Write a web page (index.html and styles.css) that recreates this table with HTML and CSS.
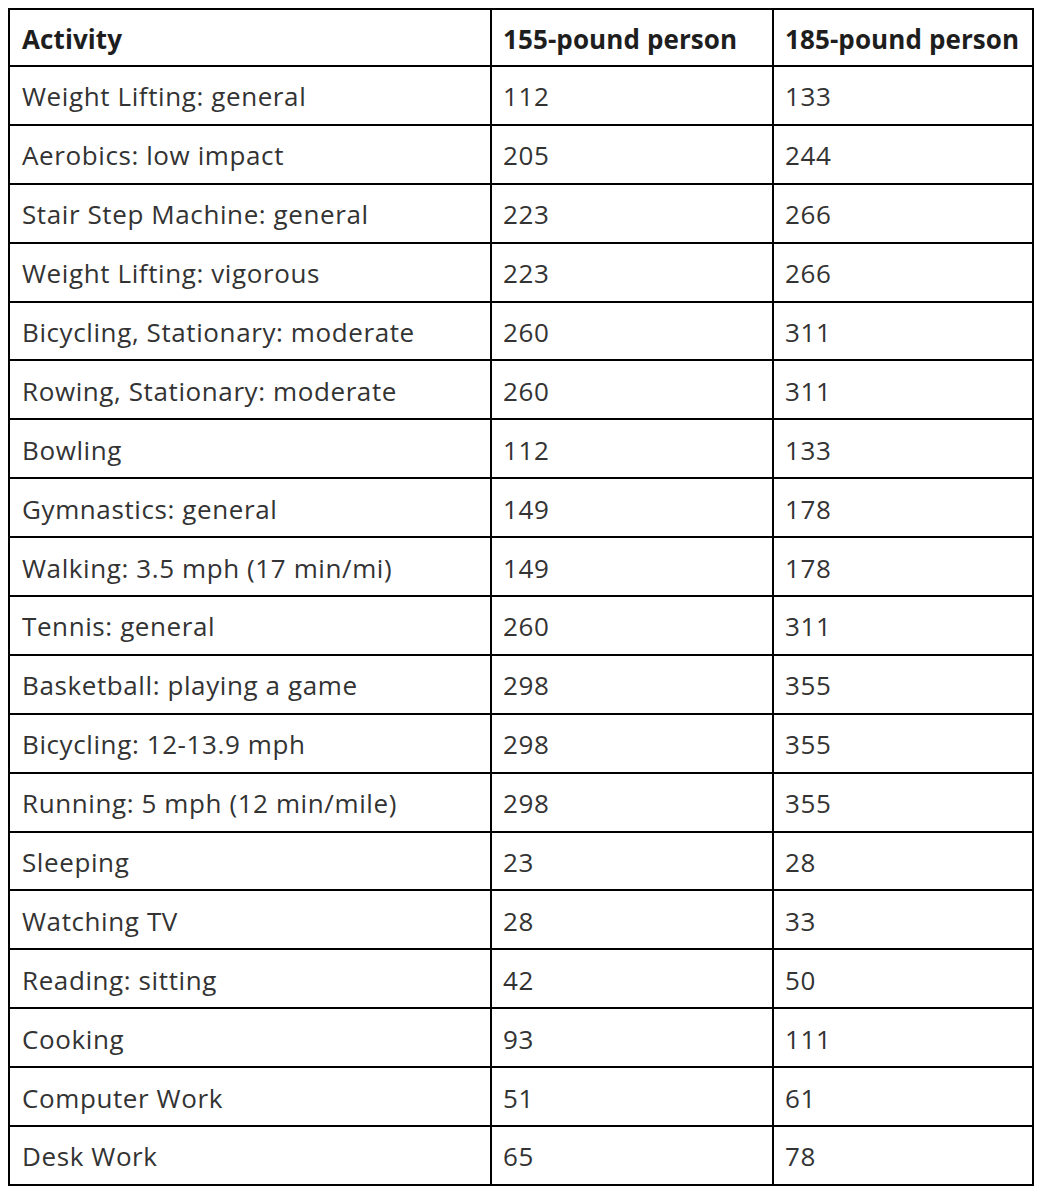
FILE: index.html
```html
<!DOCTYPE html>
<html>
<head>
<meta charset="utf-8">
<link rel="stylesheet" href="styles.css">
</head>
<body>
<table class="cal-table">
  <colgroup>
    <col class="col-activity">
    <col class="col-155">
    <col class="col-185">
  </colgroup>
  <thead>
    <tr class="head-row"><th>Activity</th><th>155-pound person</th><th>185-pound person</th></tr>
  </thead>
  <tbody>
    <tr><td>Weight Lifting: general</td><td>112</td><td>133</td></tr>
    <tr><td>Aerobics: low impact</td><td>205</td><td>244</td></tr>
    <tr><td>Stair Step Machine: general</td><td>223</td><td>266</td></tr>
    <tr><td>Weight Lifting: vigorous</td><td>223</td><td>266</td></tr>
    <tr><td>Bicycling, Stationary: moderate</td><td>260</td><td>311</td></tr>
    <tr><td>Rowing, Stationary: moderate</td><td>260</td><td>311</td></tr>
    <tr><td>Bowling</td><td>112</td><td>133</td></tr>
    <tr><td>Gymnastics: general</td><td>149</td><td>178</td></tr>
    <tr><td>Walking: 3.5 mph (17 min/mi)</td><td>149</td><td>178</td></tr>
    <tr><td>Tennis: general</td><td>260</td><td>311</td></tr>
    <tr><td>Basketball: playing a game</td><td>298</td><td>355</td></tr>
    <tr><td>Bicycling: 12-13.9 mph</td><td>298</td><td>355</td></tr>
    <tr><td>Running: 5 mph (12 min/mile)</td><td>298</td><td>355</td></tr>
    <tr><td>Sleeping</td><td>23</td><td>28</td></tr>
    <tr><td>Watching TV</td><td>28</td><td>33</td></tr>
    <tr><td>Reading: sitting</td><td>42</td><td>50</td></tr>
    <tr><td>Cooking</td><td>93</td><td>111</td></tr>
    <tr><td>Computer Work</td><td>51</td><td>61</td></tr>
    <tr><td>Desk Work</td><td>65</td><td>78</td></tr>
  </tbody>
</table>
</body>
</html>
```

FILE: styles.css
```css
html, body {
  background: #ffffff;
}
body {
  margin: 8px;
  font-family: "Open Sans", Lato, "Liberation Sans", sans-serif;
  color: #333333;
}
.cal-table {
  border-collapse: separate;
  border-spacing: 0;
  table-layout: fixed;
  width: 1026px;
  border-top: 2px solid #000000;
  border-left: 2px solid #000000;
  font-size: 26px;
  letter-spacing: 0.6px;
}
.col-activity { width: 482px; }
.col-155 { width: 282px; }
.col-185 { width: 260px; }
.cal-table tr {
  height: 58.9px;
}
.cal-table .head-row {
  height: 57px;
}
.cal-table th,
.cal-table td {
  border-right: 2px solid #000000;
  border-bottom: 2px solid #000000;
  padding: 2px 4px 0 11px;
  text-align: left;
  vertical-align: middle;
  white-space: nowrap;
  overflow: hidden;
}
.cal-table th:first-child,
.cal-table td:first-child {
  padding-left: 12px;
}
.cal-table th {
  font-weight: 700;
  color: #1e1e1e;
  letter-spacing: 0.1px;
}
```
